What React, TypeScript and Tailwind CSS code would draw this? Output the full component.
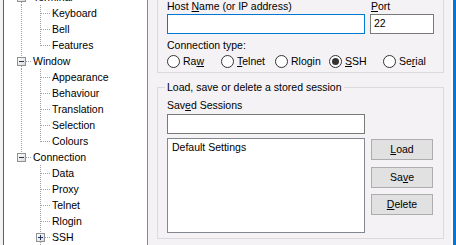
import React from "react";

type Row = {
  t: string;
  lvl: 0 | 1;
  box?: "minus" | "plus";
  down?: boolean;
  cont0?: boolean;
  last?: boolean;
};

const rows: Row[] = [
  { t: "Terminal", lvl: 0, box: "minus", down: true },
  { t: "Keyboard", lvl: 1, cont0: true },
  { t: "Bell", lvl: 1, cont0: true },
  { t: "Features", lvl: 1, cont0: true, last: true },
  { t: "Window", lvl: 0, box: "minus", down: true },
  { t: "Appearance", lvl: 1, cont0: true },
  { t: "Behaviour", lvl: 1, cont0: true },
  { t: "Translation", lvl: 1, cont0: true },
  { t: "Selection", lvl: 1, cont0: true },
  { t: "Colours", lvl: 1, cont0: true, last: true },
  { t: "Connection", lvl: 0, box: "minus", down: false },
  { t: "Data", lvl: 1 },
  { t: "Proxy", lvl: 1 },
  { t: "Telnet", lvl: 1 },
  { t: "Rlogin", lvl: 1 },
  { t: "SSH", lvl: 1, box: "plus" },
];

const DOT = { stroke: "#a0a0a0", strokeWidth: 1, strokeDasharray: "1 1", shapeRendering: "crispEdges" as const };

function ExpBox({ cx, kind }: { cx: number; kind: "minus" | "plus" }) {
  return (
    <g shapeRendering="crispEdges">
      <defs>
        <linearGradient id={"g" + cx} x1="0" y1="0" x2="1" y2="1">
          <stop offset="0" stopColor="#ffffff" />
          <stop offset="1" stopColor="#d8d8d8" />
        </linearGradient>
      </defs>
      <rect x={cx - 3.5} y={4.5} width={8} height={8} fill={`url(#g${cx})`} stroke="#919191" />
      <line x1={cx - 2} y1={8.5} x2={cx + 3} y2={8.5} stroke="#1e3560" />
      {kind === "plus" && <line x1={cx + 0.5} y1={6} x2={cx + 0.5} y2={11} stroke="#1e3560" />}
    </g>
  );
}

function Connector({ r }: { r: Row }) {
  if (r.lvl === 0) {
    return (
      <svg width={29} height={16} viewBox="4 0 29 16" className="shrink-0">
        <line x1={21.5} y1={0} x2={21.5} y2={4} {...DOT} />
        {r.down && <line x1={21.5} y1={13} x2={21.5} y2={16} {...DOT} />}
        <line x1={26} y1={8.5} x2={32} y2={8.5} {...DOT} />
        <ExpBox cx={21} kind={r.box ?? "minus"} />
      </svg>
    );
  }
  return (
    <svg width={48} height={16} viewBox="4 0 48 16" className="shrink-0">
      {r.cont0 && <line x1={21.5} y1={0} x2={21.5} y2={16} {...DOT} />}
      {r.box ? (
        <>
          <line x1={40.5} y1={0} x2={40.5} y2={4} {...DOT} />
          {!r.last && <line x1={40.5} y1={13} x2={40.5} y2={16} {...DOT} />}
          <line x1={45} y1={8.5} x2={51} y2={8.5} {...DOT} />
          <ExpBox cx={40} kind={r.box} />
        </>
      ) : (
        <>
          <line x1={40.5} y1={0} x2={40.5} y2={r.last ? 9 : 16} {...DOT} />
          <line x1={41} y1={8.5} x2={51} y2={8.5} {...DOT} />
        </>
      )}
    </svg>
  );
}

function Radio({ pre, u, post, checked }: { pre: string; u: string; post: string; checked?: boolean }) {
  return (
    <div className="flex items-center gap-[3px] w-[54px] shrink-0">
      <span className="w-[13px] h-[13px] rounded-full border border-[#333333] bg-white flex items-center justify-center shrink-0">
        {checked && <span className="w-[7px] h-[7px] rounded-full bg-[#333333]" />}
      </span>
      <span className="leading-[13px] whitespace-nowrap">
        {pre}
        {u && <u className="underline-offset-1">{u}</u>}
        {post}
      </span>
    </div>
  );
}

function Btn({ pre, u, post, cls }: { pre: string; u: string; post: string; cls?: string }) {
  return (
    <div className={"w-[62px] h-[21px] bg-[#e1e1e1] border border-[#adadad] flex items-center justify-center leading-[13px] " + (cls ?? "")}>
      <span>
        {pre}
        <u className="underline-offset-1">{u}</u>
        {post}
      </span>
    </div>
  );
}

export default function App() {
  return (
    <div className="w-[456px] h-[245px] overflow-hidden flex bg-[#f5f2f5] text-black font-['Liberation_Sans',Arial,sans-serif] text-[10.5px]">
      <div className="w-[3px] shrink-0" />
      {/* Tree */}
      <div className="w-[145px] h-full shrink-0 bg-white border-l border-l-[#0078d7] border-r border-r-[#828790] overflow-hidden">
        <div className="-mt-[11px] flex flex-col">
          {rows.map((r) => (
            <div key={r.t} className="h-[16px] flex items-center leading-[16px] whitespace-nowrap">
              <Connector r={r} />
              <span>{r.t}</span>
            </div>
          ))}
          <div className="h-[16px] flex items-center">
            <svg width={48} height={16} viewBox="4 0 48 16" className="shrink-0">
              <line x1={40.5} y1={0} x2={40.5} y2={9} {...DOT} />
            </svg>
          </div>
        </div>
      </div>
      {/* Right panel */}
      <div className="w-[303px] h-full shrink-0 pl-[9px] flex flex-col">
        <div className="-mt-[11px] w-[287px] border border-[#dcdadc] pt-[10px] pb-[4px] pl-[9px] flex flex-col">
          <div className="flex gap-[5px]">
            <div className="w-[198px] flex flex-col">
              <div className="h-[14px] leading-[13px]">
                Host <u className="underline-offset-1">N</u>ame (or IP address)
              </div>
              <div className="h-[20px] bg-white border border-[#0078d7]" />
            </div>
            <div className="w-[64px] flex flex-col">
              <div className="h-[14px] leading-[13px] pl-[1px]">
                <u className="underline-offset-1">P</u>ort
              </div>
              <div className="h-[20px] bg-white border border-[#7a7a7a] pl-[3px] flex items-center">22</div>
            </div>
          </div>
          <div className="mt-[5px] h-[13px] leading-[13px]">Connection type:</div>
          <div className="mt-[2px] h-[14px] flex items-center">
            <Radio pre="Ra" u="w" post="" />
            <Radio pre="" u="T" post="elnet" />
            <Radio pre="Rlogin" u="" post="" />
            <Radio pre="" u="S" post="SH" checked />
            <Radio pre="Se" u="r" post="ial" />
          </div>
        </div>
        <div className="relative mt-[14px] w-[287px] border border-[#dcdadc] pt-[11px] pb-[5px] pl-[9px] flex gap-[6px]">
          <span className="absolute left-[7px] -top-[7px] px-[2px] bg-[#f5f2f5] leading-[13px] whitespace-nowrap">
            Load, save or delete a stored session
          </span>
          <div className="w-[198px] flex flex-col">
            <div className="h-[13px] leading-[13px]">
              Sav<u className="underline-offset-1">e</u>d Sessions
            </div>
            <div className="mt-[2px] h-[20px] bg-white border border-[#7a7a7a]" />
            <div className="mt-[4px] h-[95px] bg-white border border-[#828790] pl-[4px] pt-[2px] leading-[13px]">
              Default Settings
            </div>
          </div>
          <div className="flex flex-col pt-[40px]">
            <Btn pre="" u="L" post="oad" />
            <Btn pre="Sa" u="v" post="e" cls="mt-[7px]" />
            <Btn pre="" u="D" post="elete" cls="mt-[6px]" />
          </div>
        </div>
      </div>
      <div className="w-[2px] h-full shrink-0 bg-[#fbfbfb]" />
      <div className="w-[3px] h-full shrink-0 bg-[#0078d7]" />
    </div>
  );
}
